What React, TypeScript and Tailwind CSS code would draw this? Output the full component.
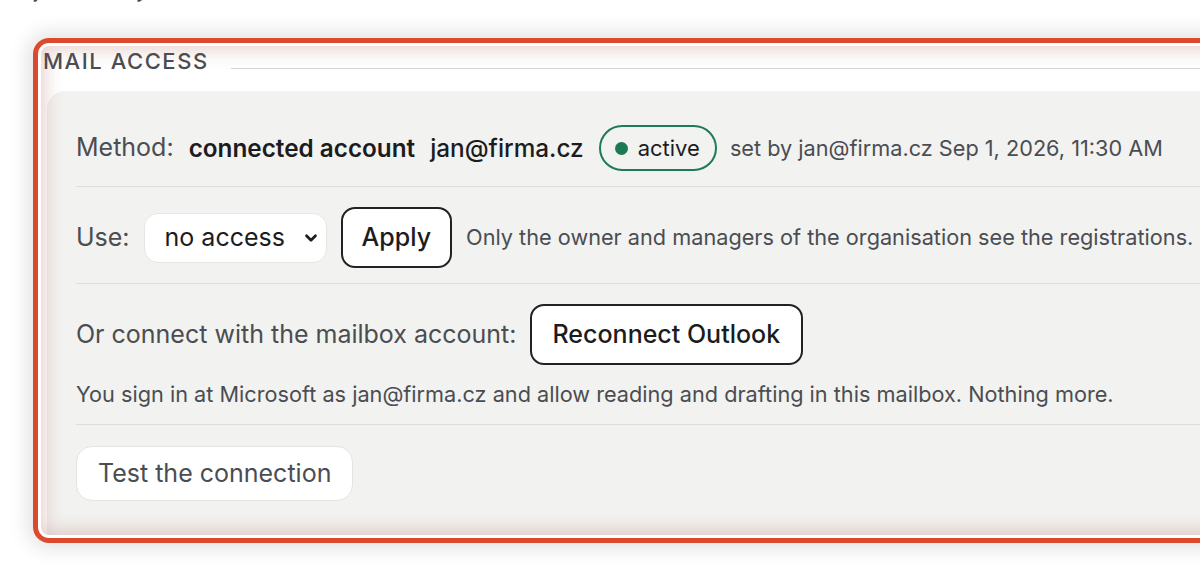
import { ChevronDown } from 'lucide-react';

export default function App() {
  return (
    <div className="relative h-[580px] w-[1200px] overflow-hidden bg-white font-['Inter','Liberation_Sans',sans-serif]">
      {/* Previous paragraph, scrolled almost out of view */}
      <p className="-mt-[25px] ml-[34px] whitespace-nowrap text-[21.7px] leading-[28px] text-[#4a4d52]">
        jobs run by the team mailbox are set here.
      </p>

      <MailAccess />

      {/* Red highlight drawn over the section */}
      <div className="pointer-events-none absolute left-[33px] top-[38px] h-[505px] w-[1200px] rounded-[16px] border-[5px] border-[#dc4a2e] shadow-[0_0_20px_5px_rgba(0,0,0,0.12),inset_0_0_0_3px_#ffffff,inset_0_0_18px_7px_rgba(160,80,70,0.26)]" />
    </div>
  );
}

function MailAccess() {
  return (
    <section>
      {/* Legend */}
      <div className="ml-[43px] mt-[44px] flex h-[28px] items-end">
        <h2 className="text-[22px] font-medium uppercase leading-[28px] tracking-[0.07em] text-[#4a4d52]">
          Mail access
        </h2>
        <div className="mb-[6px] ml-[22px] h-px flex-1 bg-[#d6d6d6]" />
      </div>

      {/* Card */}
      <div className="ml-[47px] mt-[16px] h-[446px] w-[1200px] rounded-tl-[18px] bg-[#f2f2f0] pl-[29px] pt-[34px]">
        <div className="flex h-[46px] items-center gap-[15px] whitespace-nowrap">
          <span className="text-[25px] text-[#4a4d52]">Method:</span>
          <span className="text-[24.3px] font-semibold text-[#1c1c1e]">connected account</span>
          <span className="text-[24.3px] font-medium text-[#1c1c1e]">jan@firma.cz</span>
          <span className="flex h-[46px] items-center gap-[10px] rounded-full border-2 border-[#1f7a56] pl-[14px] pr-[15px]">
            <span className="size-[13px] rounded-full bg-[#1b7a51]" />
            <span className="text-[22px] text-[#1c1c1e]">active</span>
          </span>
          <span className="-ml-[2px] text-[21.7px] text-[#4a4d52]">
            set by jan@firma.cz Sep 1, 2026, 11:30 AM
          </span>
        </div>

        <div className="mt-[15px] h-px bg-[#dddcd9]" />

        <div className="mt-[20px] flex h-[61px] items-center gap-[14px] whitespace-nowrap">
          <span className="text-[25px] text-[#4a4d52]">Use:</span>
          <div className="relative">
            <select
              defaultValue="none"
              className="h-[50px] w-[183px] appearance-none rounded-[14px] border border-[#e6e6e4] bg-white pl-[20px] text-[25px] text-[#1c1c1e] outline-none"
            >
              <option value="none">no access</option>
              <option value="read">read only</option>
              <option value="draft">read and draft</option>
            </select>
            <ChevronDown
              className="pointer-events-none absolute right-[7px] top-[16px] text-[#1c1c1e]"
              size={18}
              strokeWidth={3.6}
            />
          </div>
          <button className="h-[61px] rounded-[14px] border-2 border-[#222222] bg-white px-[19px] text-[25px] font-medium text-[#1c1c1e]">
            Apply
          </button>
          <span className="text-[21.7px] text-[#4a4d52]">
            Only the owner and managers of the organisation see the registrations.
          </span>
        </div>

        <div className="mt-[15px] h-px bg-[#dddcd9]" />

        <div className="mt-[20px] flex h-[61px] items-center gap-[13px] whitespace-nowrap">
          <span className="text-[25px] text-[#4a4d52]">Or connect with the mailbox account:</span>
          <button className="h-[61px] rounded-[14px] border-2 border-[#222222] bg-white px-[21px] text-[25px] font-medium text-[#1c1c1e]">
            Reconnect Outlook
          </button>
        </div>

        <p className="mt-[15px] whitespace-nowrap text-[21.7px] leading-[28px] text-[#4a4d52]">
          You sign in at Microsoft as jan@firma.cz and allow reading and drafting in this mailbox. Nothing more.
        </p>

        <div className="mt-[16px] h-px bg-[#dddcd9]" />

        <button className="mt-[21px] h-[55px] rounded-[16px] border border-[#e4e4e2] bg-white px-[21px] text-[25px] text-[#4a4d52]">
          Test the connection
        </button>
      </div>
    </section>
  );
}
